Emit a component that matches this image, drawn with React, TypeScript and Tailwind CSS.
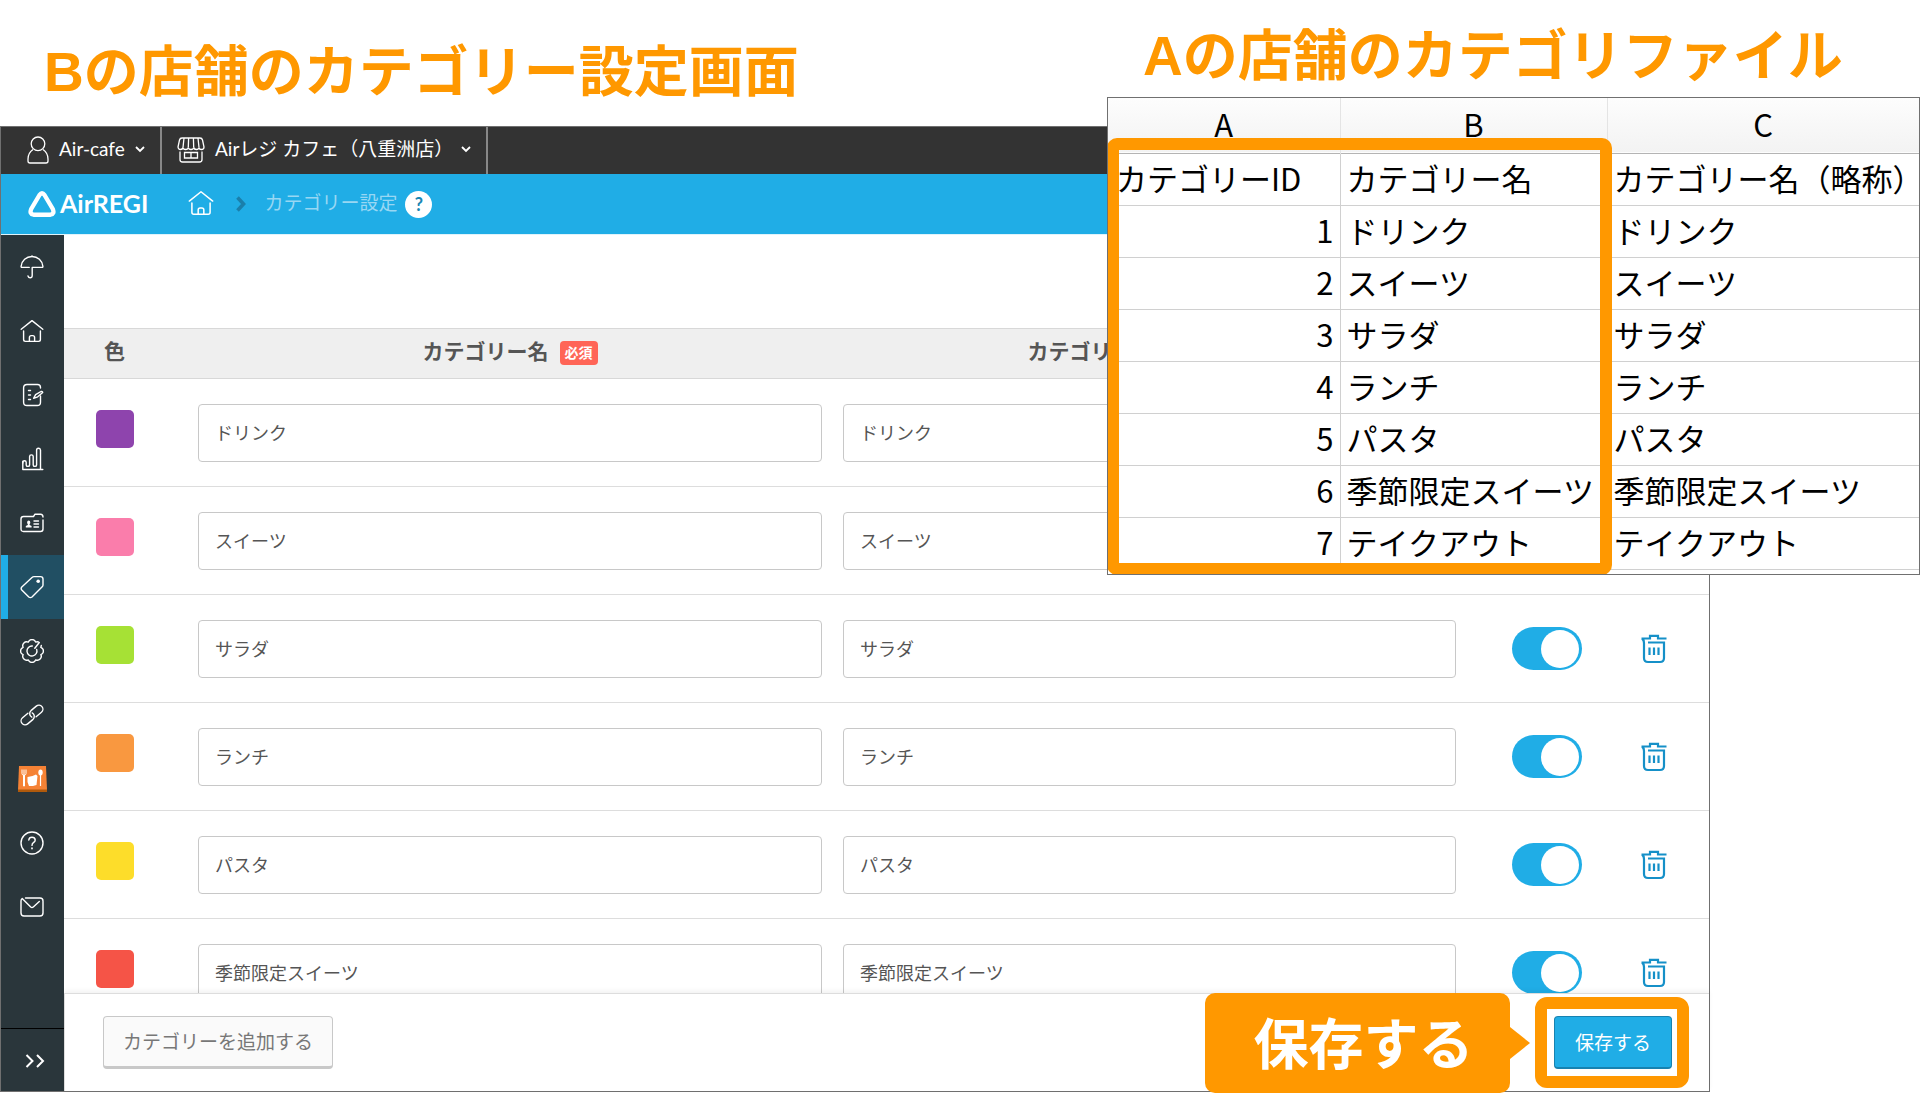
import type { ReactNode } from 'react'

const CATEGORIES = [
  { name: 'ドリンク', color: 'bg-[#8e44ad]' },
  { name: 'スイーツ', color: 'bg-[#fa7dab]' },
  { name: 'サラダ', color: 'bg-[#a6e135]' },
  { name: 'ランチ', color: 'bg-[#f99840]' },
  { name: 'パスタ', color: 'bg-[#fddd2a]' },
  { name: '季節限定スイーツ', color: 'bg-[#f55447]' },
]

const SHEET_ROWS = ['ドリンク', 'スイーツ', 'サラダ', 'ランチ', 'パスタ', '季節限定スイーツ', 'テイクアウト']

function Icon({ children, className = 'size-6' }: { children: ReactNode; className?: string }) {
  return (
    <svg
      viewBox="0 0 24 24"
      className={className}
      fill="none"
      stroke="currentColor"
      strokeWidth="1.4"
      strokeLinecap="round"
      strokeLinejoin="round"
      aria-hidden="true"
    >
      {children}
    </svg>
  )
}

const HomeShape = () => (
  <>
    <path d="M1.2 10.2 12 1.6l10.8 8.6" />
    <path d="M3.6 12v8.6q0 1.8 1.8 1.8h13.2q1.8 0 1.8-1.8V12" />
    <path d="M9.4 22.2v-3.8q0-1.8 1.8-1.8h1.6q1.8 0 1.8 1.8v3.8" />
  </>
)

const NAV_ITEMS = [
  {
    id: 'umbrella',
    icon: (
      <Icon>
        <path d="M9.2 12.4H1.8Q1 12.4 1.1 11.4C1.6 5.600 6.300 1.500 12 1.500s10.400 4.100 10.900 9.900q.1 1-.7 1H12.200v8q0 2.300-2 2.300-1.700 0-2.200-1.700" />
        <path d="M12 1.500V.900" />
      </Icon>
    ),
  },
  { id: 'home', icon: <Icon><HomeShape /></Icon> },
  {
    id: 'register',
    icon: (
      <Icon>
        <path d="M20.500 5V4.500Q20.500 1.500 17.500 1.500h-10.500Q3.600 1.500 3.600 4.800v14.400q0 3.300 3.400 3.300h10.200q3.300 0 3.300-3.300V13" />
        <path d="m13.600 15.300 2-3.600 5.400-3.200q1.400-.4 1.700 1l-5 4.300zM8.500 7.500h2M8.500 12h2M8.500 16.500h2" />
      </Icon>
    ),
  },
  {
    id: 'sales',
    icon: (
      <Icon>
        <path d="M2.800 14.500v8h20" />
        <path d="M2.800 16v-.5q0-1.700 1.700-1.700t1.700 1.700v2.400q0 1.500 1.700 1.500t1.700-1.500V9.600q0-1.700 1.800-1.700t1.800 1.700v8.300q0 1.500 1.700 1.500t1.700-1.500V3q0-1.700 1.800-1.700T20.500 3v19.200" />
      </Icon>
    ),
  },
  {
    id: 'customers',
    icon: (
      <Icon>
        <path d="M23 9v9q0 2.500-2.500 2.500h-17Q1 20.500 1 18V8q0-2.500 2.500-2.500h10l1.500-2.300h5.500Q23 3.200 23 6" />
        <path d="M14 10h4.500M14 13h4.500M14 16h4.500" />
        <path
          d="M8.700 9.400q1.600 0 1.600 2 0 1-.7 1.700v.9l2 1v1.400H5.800V15l2-1v-.9q-.7-.7-.7-1.700 0-2 1.600-2z"
          fill="currentColor"
          stroke="none"
        />
      </Icon>
    ),
  },
  {
    id: 'items',
    active: true,
    icon: (
      <Icon>
        <path d="M14 1.600h6.500q2.500 0 2.500 2.500V10q0 1-.8 1.800L12 22q-1.600 1.300-3.200 0l-7-7q-1.300-1.600 0-3L12 2.400q.9-.8 2-.8z" />
        <circle cx="18.200" cy="6.300" r="1.800" fill="currentColor" stroke="none" />
      </Icon>
    ),
  },
  {
    id: 'settings',
    icon: (
      <Icon>
        <path d="M20.870 8.330a3.900 3.900 0 0 1 0 7.340a3.900 3.900 0 0 1-5.200 5.200a3.900 3.900 0 0 1-7.340 0a3.900 3.900 0 0 1-5.200-5.200a3.900 3.900 0 0 1 0-7.340a3.900 3.900 0 0 1 5.200-5.200a3.900 3.900 0 0 1 7.340 0q2-.8 3.600.4L14.800 9.200M21.300 6.400l-.43 1.930" />
        <path d="M16.700 10.400A5 5 0 1 1 12.300 7" />
      </Icon>
    ),
  },
  {
    id: 'link',
    icon: (
      <Icon>
        <g transform="rotate(-40 12 12)">
          <path d="M14 16h7a4 4 0 0 0 0-8h-7a4 4 0 0 0-3.500 5.500" />
          <path d="M10 8H3a4 4 0 0 0 0 8h7a4 4 0 0 0 3.500-5.500" />
        </g>
      </Icon>
    ),
  },
  {
    id: 'order',
    icon: (
      <svg viewBox="0 0 29 26" className="ml-[2px] h-[26px] w-[29px]" aria-hidden="true">
        <path d="M1 0h27l1 24H0z" fill="#f58235" />
        <path d="M0 23.500h29V26H0z" fill="#b05a0c" />
        <path d="M4 3.500v4q0 1.500 1.500 1.500v11h1V9q1.500 0 1.500-1.500v-4" fill="none" stroke="#fff" />
        <path d="M6 3.500V9" stroke="#fff" />
        <path d="m9.500 11 5-1 3.500-1.500 1.500 1.500-1 9-3.500 1H11l-1.500-4z" fill="#fff" />
        <ellipse cx="22.500" cy="6.500" rx="2.200" ry="3" fill="#fff" />
        <path d="M22.500 9v11" stroke="#fff" strokeWidth="1.200" />
      </svg>
    ),
  },
  {
    id: 'help',
    icon: (
      <Icon>
        <circle cx="12" cy="12" r="11" />
        <path d="M8.800 9q.3-2.800 3.200-2.800t3.200 2.700q0 1.400-1.500 2.500-1.700 1.200-1.700 3" />
        <path d="M12 17v.6" strokeWidth="1.700" />
      </Icon>
    ),
  },
  {
    id: 'mail',
    icon: (
      <Icon>
        <path d="M5.500 3h14.500q3 0 3 3v12q0 3-3 3H4q-3 0-3-3V6q0-1.600 1.200-2.500L10.700 12q1.300 1.200 2.600 0l6-5.500" />
      </Icon>
    ),
  },
]

function Caret() {
  return (
    <svg viewBox="0 0 10 7" className="h-[7px] w-[10px]" fill="none" stroke="currentColor" strokeWidth="1.800" aria-hidden="true">
      <path d="m1 1 4 4 4-4" />
    </svg>
  )
}

function TopBar() {
  return (
    <div className="flex h-[47px] bg-[#333] text-[19px] text-white">
      <button className="flex w-[161px] items-center border-r-2 border-[#888] pb-[2px] pl-[26px]">
        <svg viewBox="0 0 22 28" className="h-7 w-[22px]" fill="none" stroke="currentColor" strokeWidth="1.300" aria-hidden="true">
          <circle cx="11" cy="7.800" r="6.800" />
          <path d="M6 13.500Q1 17 1 23v2q0 2 2 2h16q2 0 2-2v-2q0-6-5-9.500" />
        </svg>
        <span className="ml-[10px] mr-[10px]">Air-cafe</span>
        <Caret />
      </button>
      <button className="flex w-[326px] items-center border-r-2 border-[#888] pb-[2px] pl-[15px]">
        <svg viewBox="0 0 28 26" className="h-[26px] w-7" fill="none" stroke="currentColor" strokeWidth="1.300" aria-hidden="true">
          <path d="M5 1h18q2 0 2.500 2L27 10q0 2.500-2.500 2.500T22 10.500q-.3 2-2.600 2t-2.700-2q-.3 2-2.700 2t-2.700-2q-.3 2-2.700 2t-2.600-2q-.4 2-2.600 2T1 10l1.500-7Q3 1 5 1z" />
          <path d="M7 1 6 10.500M11.600 1l-.3 9.500M16.400 1l.3 9.500M21 1l1 9.500M3 14.500v8Q3 25 5.500 25h17q2.500 0 2.500-2.500v-8M7.500 15.500h13v5.500h-13zM14 15.500V21" />
        </svg>
        <span className="ml-[10px] mr-2 whitespace-nowrap">Airレジ カフェ（八重洲店）</span>
        <Caret />
      </button>
    </div>
  )
}

function BreadcrumbBar() {
  return (
    <header className="flex h-[60px] items-center bg-[#20ade6] pl-[27px] text-white">
      <a href="#top" className="flex items-center">
        <svg viewBox="0 0 28 26" className="h-[26px] w-7" fill="none" stroke="currentColor" strokeWidth="4.400" strokeLinejoin="round" aria-hidden="true">
          <path d="M11.500 4q2.500-3.500 5 0l8.300 14q2 5-2.300 5.700h-17q-4.300-.7-2.300-5.700z" />
        </svg>
        <span className="ml-1 text-[25px] font-bold">AirREGI</span>
      </a>
      <a href="#home" aria-label="ホーム" className="ml-10 pb-[2px]">
        <Icon className="size-[26px]"><HomeShape /></Icon>
      </a>
      <svg viewBox="0 0 10 16" className="ml-[22px] h-4 w-[10px]" fill="none" stroke="#1a7fab" strokeWidth="3.600" aria-hidden="true">
        <path d="m1.500 1.500 6 6.500-6 6.500" />
      </svg>
      <span className="ml-[18px] pb-[2px] text-[19px] text-[#98d7f3]">カテゴリー設定</span>
      <button className="ml-2 flex size-[27px] items-center justify-center rounded-full bg-white text-lg font-bold leading-none text-[#1a86b3]">
        ?
      </button>
    </header>
  )
}

function Sidebar() {
  return (
    <nav className="flex w-[63px] shrink-0 flex-col bg-[#2a363b] text-white">
      {NAV_ITEMS.map(item => (
        <a
          key={item.id}
          href={'#' + item.id}
          aria-label={item.id}
          className={[
            'flex h-16 items-center justify-center',
            item.active ? 'border-l-7 border-[#20ade6] bg-[#214f63] pr-[9px]' : 'pr-[2px]',
          ].join(' ')}
        >
          {item.icon}
        </a>
      ))}
      <button aria-label="メニューを開く" className="mt-auto flex h-[63px] items-center justify-center border-t border-black pl-1 pt-[2px]">
        <svg viewBox="0 0 20 14" className="h-[14px] w-5" fill="none" stroke="currentColor" strokeWidth="2" aria-hidden="true">
          <path d="m1.500 1 6 6-6 6M12 1l6 6-6 6" />
        </svg>
      </button>
    </nav>
  )
}

function CategoryTable() {
  return (
    <table className="mt-[93px] w-full table-fixed border-collapse text-lg text-[#555]">
      <colgroup>
        <col className="w-[101px]" />
        <col className="w-[668px]" />
        <col />
        <col className="w-[162px]" />
        <col className="w-[81px]" />
      </colgroup>
      <thead>
        <tr className="h-[50px] border-y border-[#d8d8d8] bg-[#efefef] text-[21px] leading-8">
          <th className="pb-[6px]">色</th>
          <th id="col-name" className="pb-[6px] pl-[33px] pr-[11px]">
            <div className="flex items-center justify-center gap-[11px]">
              カテゴリー名
              <span className="mt-1 rounded-sm bg-[#ff6557] px-[5px] text-sm leading-6 text-white">必須</span>
            </div>
          </th>
          <th id="col-short" className="pb-[6px]">
            <div className="flex items-center justify-center gap-3">
              カテゴリー名（略称）
              <span className="size-[22px] rounded-full bg-[#20ade6]" />
            </div>
          </th>
          <th />
          <th />
        </tr>
      </thead>
      <tbody>
        {CATEGORIES.map(cat => (
          <tr key={cat.name} className="h-[108px] border-b border-[#ddd]">
            <td className="pb-2">
              <button aria-label={cat.name + 'の色'} className={`mx-auto block size-[38px] rounded-[5px] ${cat.color}`} />
            </td>
            <td className="pl-[33px] pr-[11px]">
              <input
                aria-labelledby="col-name"
                defaultValue={cat.name}
                className="block h-[58px] w-full rounded border border-[#c8c8c8] bg-white px-4 pb-[2px]"
              />
            </td>
            <td className="px-[10px]">
              <input
                aria-labelledby="col-short"
                defaultValue={cat.name}
                className="block h-[58px] w-full rounded border border-[#c8c8c8] bg-white px-4 pb-[2px]"
              />
            </td>
            <td>
              <label className="mx-auto flex h-[43px] w-[70px] items-center rounded-full bg-[#20ade6] px-[3px] has-checked:justify-end">
                <input type="checkbox" defaultChecked aria-label="表示" className="sr-only" />
                <span className="size-[38px] rounded-full bg-white" />
              </label>
            </td>
            <td className="pr-[29px]">
              <button aria-label="削除" className="mx-auto block text-[#1590c8]">
                <svg viewBox="0 0 26 30" className="h-[30px] w-[26px]" fill="none" stroke="currentColor" strokeWidth="2.200" aria-hidden="true">
                  <path d="M.500 4.500h8.500V1.800h8v2.700h8.500M1 4.500q2 1.500 2 4.500v15q0 4 4 4h12q4 0 4-4V8.500H7" />
                  <path d="M8.500 13.500v7.500M13 13.500v7.500M17.500 13.500v7.500" />
                </svg>
              </button>
            </td>
          </tr>
        ))}
      </tbody>
    </table>
  )
}

function Footer() {
  return (
    <footer className="flex justify-between border-l border-t border-[#ddd] bg-white py-[22px] pl-[38px] pr-[37px] text-[19px] shadow-[0_-2px_5px_rgba(0,0,0,0.06)]">
      <button className="h-[53px] w-[230px] rounded border border-b-3 border-[#c8c8c8] bg-[#fafafa] pt-[2px] text-[#777]">
        カテゴリーを追加する
      </button>
      <div className="relative">
        <div className="absolute -inset-y-[19px] -left-[19px] -right-[17px] rounded-xl border-12 border-[#ff9800] bg-white" />
        <button className="relative h-[53px] w-[118px] rounded border border-b-2 border-[#1782b0] bg-[#20ade6] pt-[2px] text-white">
          保存する
        </button>
        {/* callout pointing at the save button */}
        <div className="absolute -top-[23px] right-[162px] flex h-[100px] w-[305px] items-center justify-center rounded-[10px] bg-[#ff9800] pl-3 text-[55px] font-bold leading-none text-white">
          保存する
          <span className="absolute left-full border-y-16 border-l-20 border-y-transparent border-l-[#ff9800]" />
        </div>
      </div>
    </footer>
  )
}

function Spreadsheet() {
  return (
    <div className="relative h-[478px] overflow-hidden border border-[#707070] bg-white">
      <table className="w-full table-fixed border-collapse text-[31px] leading-none text-black">
        <colgroup>
          <col className="w-[232px]" />
          <col className="w-[267px]" />
          <col />
        </colgroup>
        <thead>
          <tr className="h-[55px] border-b border-[#b4b4b4] bg-linear-to-b from-[#fdfdfd] to-[#f3f3f3]">
            <th className="border-r border-[#e4e4e4] pb-1 font-normal">A</th>
            <th className="border-r border-[#e4e4e4] pb-1 font-normal">B</th>
            <th className="pb-1 font-normal">C</th>
          </tr>
        </thead>
        <tbody>
          <tr className="h-[52px] whitespace-nowrap border-b border-[#d0d0d0]">
            <td className="border-r border-[#d0d0d0] pb-1 pl-2">カテゴリーID</td>
            <td className="border-r border-[#d0d0d0] pb-1 pl-[6px]">カテゴリー名</td>
            <td className="pb-1 pl-[6px]">
              カテゴリー名（略称<span className="[font-feature-settings:'halt']">）</span>
            </td>
          </tr>
          {SHEET_ROWS.map((name, i) => (
            <tr key={name} className="h-[52px] whitespace-nowrap border-b border-[#d0d0d0]">
              <td className="border-r border-[#d0d0d0] pb-1 pr-[6px] text-right">{i + 1}</td>
              <td className="border-r border-[#d0d0d0] pb-1 pl-[6px]">{name}</td>
              <td className="pb-1 pl-[6px]">{name}</td>
            </tr>
          ))}
        </tbody>
      </table>
      {/* highlight round columns A and B */}
      <div className="absolute -left-px top-10 h-[437px] w-[505px] rounded-[10px] border-12 border-[#ff9800]" />
    </div>
  )
}

export default function App() {
  return (
    <div lang="ja" className="relative min-h-screen overflow-hidden bg-white font-[Lato,'Noto_Sans_CJK_JP',sans-serif]">
      <h1 className="h-[126px] pl-11 pt-8 font-['Liberation_Sans','Noto_Sans_CJK_JP',sans-serif] text-[55px] font-bold leading-[80px] text-[#ff9800]">
        Bの店舗のカテゴリー設定画面
      </h1>

      <div className="mr-[210px] border border-[#707070]">
        <TopBar />
        <BreadcrumbBar />
        <div className="flex border-t border-[#dff3fb]">
          <Sidebar />
          <main className="min-w-0 flex-1">
            <div className="h-[758px] overflow-hidden">
              <CategoryTable />
            </div>
            <Footer />
          </main>
        </div>
      </div>

      <section className="absolute right-0 top-0 w-[813px] font-['Noto_Sans_CJK_JP',sans-serif]">
        <h2 className="h-[97px] pl-9 pt-4 font-['Liberation_Sans','Noto_Sans_CJK_JP',sans-serif] text-[55px] font-bold leading-[80px] text-[#ff9800]">
          Aの店舗のカテゴリファイル
        </h2>
        <Spreadsheet />
      </section>
    </div>
  )
}
